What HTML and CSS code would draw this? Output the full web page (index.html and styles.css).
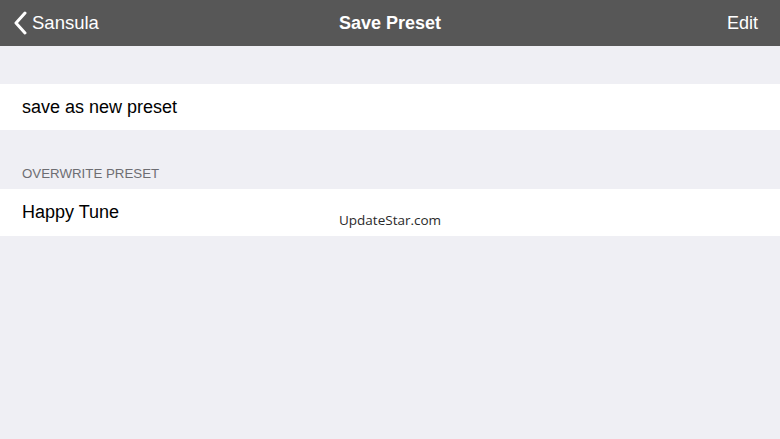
FILE: index.html
```html
<!DOCTYPE html>
<html>
<head>
<meta charset="utf-8">
<link rel="stylesheet" href="styles.css">
</head>
<body>
<div class="navbar">
  <div class="nav-left">
    <svg class="chev" width="14" height="24" viewBox="0 0 14 24"><path d="M12 2 L3 12 L12 22" fill="none" stroke="#fff" stroke-width="3" stroke-linecap="round" stroke-linejoin="round"/></svg>
    <span>Sansula</span>
  </div>
  <div class="nav-title">Save Preset</div>
  <div class="nav-right">Edit</div>
</div>
<div class="content">
  <div class="spacer"></div>
  <div class="row">save as new preset</div>
  <div class="section-header">OVERWRITE PRESET</div>
  <div class="row row-wm">Happy Tune<span class="wm">UpdateStar.com</span></div>
</div>
</body>
</html>
```
FILE: styles.css
```css
html, body {
  margin: 0;
  padding: 0;
  width: 780px;
  height: 439px;
  overflow: hidden;
  background: #efeff4;
  font-family: "Liberation Sans", Arial, sans-serif;
}
.navbar {
  height: 46px;
  background: #575757;
  color: #fff;
  display: grid;
  grid-template-columns: 1fr auto 1fr;
  align-items: center;
  font-size: 18px;
}
.nav-left {
  display: flex;
  align-items: center;
  gap: 5px;
  padding-left: 13px;
  font-size: 18.5px;
}
.chev { display: block; }
.nav-title {
  font-weight: bold;
}
.nav-right {
  justify-self: end;
  padding-right: 22px;
}
.spacer { height: 38px; }
.row {
  height: 46px;
  background: #fff;
  display: flex;
  align-items: center;
  padding-left: 22px;
  font-size: 18px;
  color: #000;
}
.row-wm { height: 47px; position: relative; }
.section-header {
  height: 59px;
  box-sizing: border-box;
  padding: 36px 0 0 22px;
  font-size: 13.3px;
  color: #6d6d72;
}
.wm {
  position: absolute;
  left: 339px;
  top: 22px;
  font-family: "Open Sans", sans-serif;
  font-size: 13.5px;
  color: #2a2a2a;
}
```
